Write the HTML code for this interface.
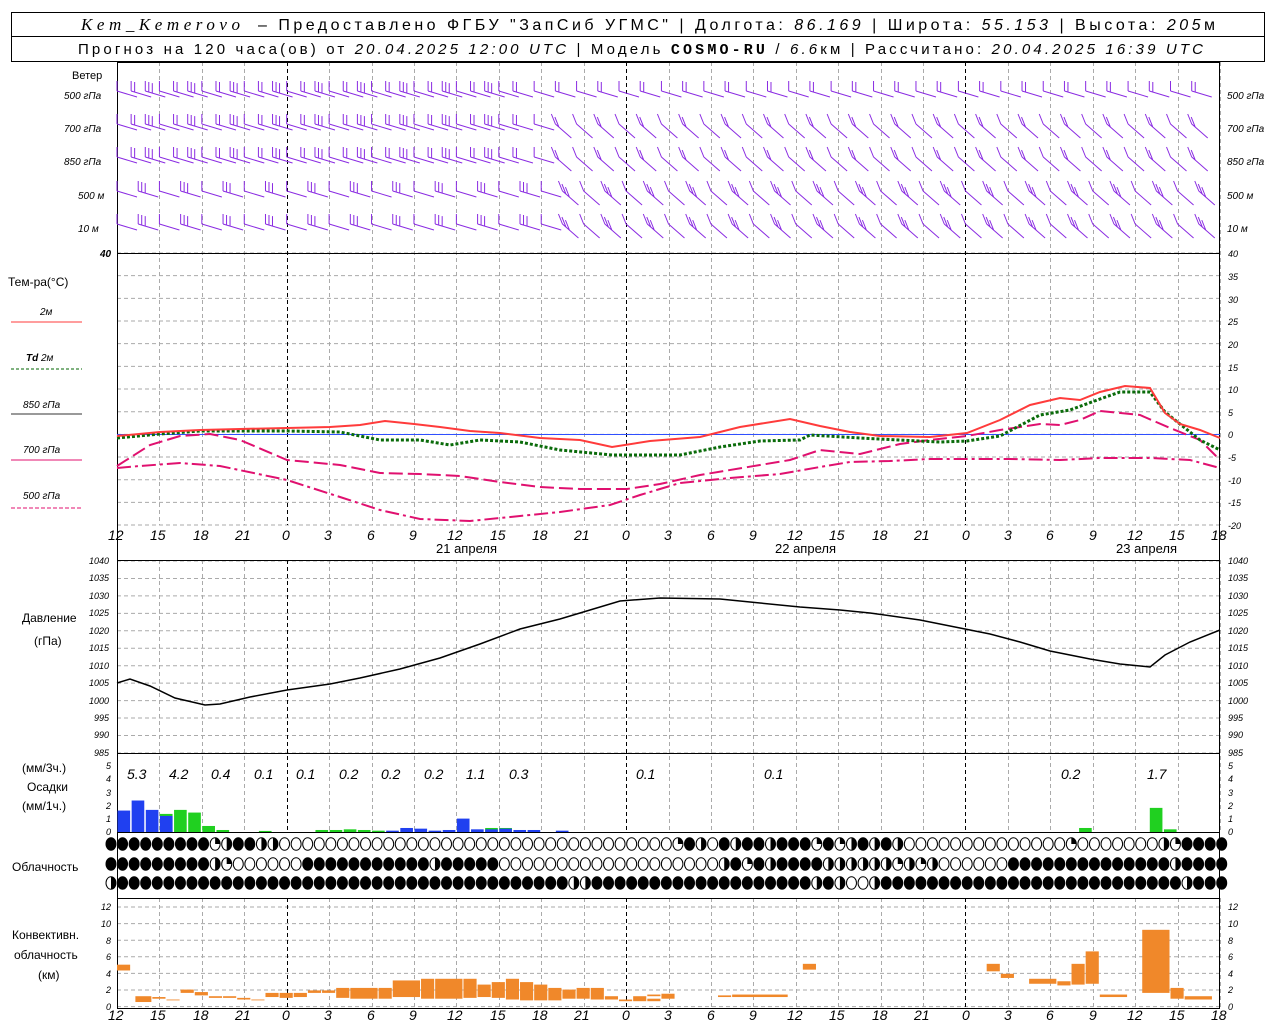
<!DOCTYPE html>
<html><head><meta charset="utf-8"><style>
html,body{margin:0;padding:0;background:#fff;}
svg{display:block;}
text{font-family:"Liberation Sans","DejaVu Sans",sans-serif;}
.t{font-size:12px;fill:#000;}
.it{font-style:italic;font-size:10px;fill:#000;}
</style></head><body>
<svg id="s" width="1280" height="1024" viewBox="0 0 1280 1024" xmlns="http://www.w3.org/2000/svg">
<rect width="1280" height="1024" fill="#fff"/>
<g id="grid"></g>
<rect x="11.5" y="12.5" width="1253" height="49" fill="none" stroke="#000"/>
<line x1="11" y1="36.5" x2="1265" y2="36.5" stroke="#000"/>
<text x="81" y="30" textLength="159" lengthAdjust="spacing" style="font-size:17px;font-family:'Liberation Serif',serif;font-style:italic">Kem_Kemerovo</text>
<text x="258" y="30" textLength="957" lengthAdjust="spacing" style="font-size:16px">– Предоставлено ФГБУ "ЗапСиб УГМС" | Долгота: <tspan font-style="italic">86.169</tspan> | Широта: <tspan font-style="italic">55.153</tspan> | Высота: <tspan font-style="italic">205</tspan>м</text>
<text x="78" y="54" textLength="1125" lengthAdjust="spacing" style="font-size:15px">Прогноз на 120 часа(ов) от <tspan font-style="italic">20.04.2025 12:00 UTC</tspan> | Модель <tspan style="font-family:'Liberation Mono',monospace;font-weight:bold">COSMO-RU</tspan> / <tspan font-style="italic">6.6</tspan>км | Рассчитано: <tspan font-style="italic">20.04.2025 16:39 UTC</tspan></text>
<text class="t" x="72" y="79" style="font-size:11px">Ветер</text>
<g class="it">
<text x="64" y="99">500 гПа</text>
<text x="64" y="132">700 гПа</text>
<text x="64" y="165">850 гПа</text>
<text x="78" y="199">500 м</text>
<text x="78" y="232">10   м</text>
<text x="1227" y="99">500 гПа</text>
<text x="1227" y="132">700 гПа</text>
<text x="1227" y="165">850 гПа</text>
<text x="1227" y="199">500 м</text>
<text x="1227" y="232">10   м</text>
<text x="100" y="257" font-weight="bold">40</text>
</g>
<g id="wind" stroke="#8a2be2" stroke-width="1" fill="none"></g>
<text class="t" x="8" y="286">Тем-ра(°C)</text>
<text class="it" x="40" y="315">2м</text>
<line x1="11" y1="322" x2="82" y2="322" stroke="#ff3b3b"/>
<text class="it" x="26" y="361"><tspan font-weight="bold">Td</tspan>  2м</text>
<line x1="11" y1="369" x2="82" y2="369" stroke="#060" stroke-dasharray="3,2"/>
<text class="it" x="23" y="408">850 гПа</text>
<line x1="11" y1="414" x2="82" y2="414" stroke="#333"/>
<text class="it" x="23" y="453">700 гПа</text>
<line x1="11" y1="460" x2="82" y2="460" stroke="#e0106f"/>
<text class="it" x="23" y="499">500 гПа</text>
<line x1="11" y1="508" x2="82" y2="508" stroke="#e0106f" stroke-dasharray="4,2"/>
<g class="it" style="font-size:9px">
<text x="1228" y="257">40</text><text x="1228" y="280">35</text><text x="1228" y="303">30</text><text x="1228" y="325">25</text><text x="1228" y="348">20</text><text x="1228" y="371">15</text><text x="1228" y="393">10</text><text x="1228" y="416">5</text><text x="1228" y="438">0</text><text x="1228" y="461">-5</text><text x="1228" y="484">-10</text><text x="1228" y="506">-15</text><text x="1228" y="529">-20</text>
</g>
<line x1="117" y1="434.5" x2="1220" y2="434.5" stroke="#3050ff"/>
<polyline fill="none" stroke="#e0106f" stroke-width="2" stroke-dasharray="14,4,3,4" points="117,468 140,466 180,463 220,466 287,480 340,497 380,510 420,519 470,521 520,516 560,512 610,505 640,495 680,483 730,478 780,474 820,467 850,462 890,461 930,459 967,459 1010,459 1060,460 1100,458 1150,458 1190,460 1220,468"/>
<polyline fill="none" stroke="#e0106f" stroke-width="2" stroke-dasharray="14,5" points="117,466 150,445 180,436 210,434 240,440 287,460 340,465 380,473 420,474 460,476 500,482 540,487 580,489 627,489 660,484 700,475 760,465 790,460 820,450 860,454 900,444 930,440 967,436 1000,430 1040,424 1060,425 1080,420 1100,411 1140,415 1170,428 1200,440 1220,460"/>
<polyline fill="none" stroke="#0a6b0a" stroke-width="3" stroke-dasharray="3,2" points="117,438 160,434 200,431 287,431 340,432 380,440 420,440 450,445 480,440 520,442 560,450 612,455 680,455 720,447 760,441 800,440 810,435 860,438 900,440 940,442 967,441 1000,436 1040,415 1070,410 1100,399 1120,392 1150,392 1165,412 1200,440 1220,450"/>
<polyline fill="none" stroke="#ff3b3b" stroke-width="2" points="117,436 160,432 200,430 240,429 287,428 330,427 360,425 385,421 414,424 440,427 470,431 500,433 540,438 580,440 612,447 650,441 700,437 740,427 790,419 820,426 850,432 880,436 930,437 967,433 1000,420 1030,405 1060,398 1080,400 1100,392 1125,386 1150,388 1165,413 1180,424 1200,430 1220,438"/>
<g class="t" style="font-size:13px">
<text x="436" y="553">21 апреля</text><text x="775" y="553">22 апреля</text><text x="1116" y="553">23 апреля</text>
</g>
<text class="t" x="22" y="622">Давление</text>
<text class="t" x="34" y="645">(гПа)</text>
<polyline fill="none" stroke="#000" stroke-width="1.5" points="117,683 130,679 150,686 175,698 205,705 220,704 250,697 287,690 330,684 360,678 400,669 440,658 480,644 520,629 560,619 590,610 620,601 660,598 720,599 760,603 800,607 840,610 870,613 920,620 960,628 990,634 1020,642 1050,651 1090,659 1120,664 1150,667 1165,655 1190,642 1220,630"/>
<text class="t" x="22" y="772">(мм/3ч.)</text>
<text class="t" x="27" y="791">Осадки</text>
<text class="t" x="22" y="810">(мм/1ч.)</text>
<g style="font-style:italic;font-size:14px;fill:#000">
<text x="127" y="779">5.3</text><text x="169" y="779">4.2</text><text x="211" y="779">0.4</text><text x="254" y="779">0.1</text><text x="296" y="779">0.1</text><text x="339" y="779">0.2</text><text x="381" y="779">0.2</text><text x="424" y="779">0.2</text><text x="466" y="779">1.1</text><text x="509" y="779">0.3</text><text x="636" y="779">0.1</text><text x="764" y="779">0.1</text><text x="1061" y="779">0.2</text><text x="1147" y="779">1.7</text>
</g>
<g id="pr"></g>
<text class="t" x="12" y="871">Облачность</text>
<g id="cl"></g>
<text class="t" x="12" y="939">Конвективн.</text>
<text class="t" x="14" y="959">облачность</text>
<text class="t" x="38" y="979">(км)</text>
<g id="cv" fill="#f0882a"></g>
<g style="font-style:italic;font-size:14px">
<text x="108" y="540">12</text><text x="150" y="540">15</text><text x="193" y="540">18</text><text x="235" y="540">21</text><text x="282" y="540">0</text><text x="324" y="540">3</text><text x="367" y="540">6</text><text x="409" y="540">9</text><text x="447" y="540">12</text><text x="490" y="540">15</text><text x="532" y="540">18</text><text x="574" y="540">21</text><text x="622" y="540">0</text><text x="664" y="540">3</text><text x="707" y="540">6</text><text x="749" y="540">9</text><text x="787" y="540">12</text><text x="829" y="540">15</text><text x="872" y="540">18</text><text x="914" y="540">21</text><text x="962" y="540">0</text><text x="1004" y="540">3</text><text x="1046" y="540">6</text><text x="1089" y="540">9</text><text x="1127" y="540">12</text><text x="1169" y="540">15</text><text x="1211" y="540">18</text>
<text x="108" y="1020">12</text><text x="150" y="1020">15</text><text x="193" y="1020">18</text><text x="235" y="1020">21</text><text x="282" y="1020">0</text><text x="324" y="1020">3</text><text x="367" y="1020">6</text><text x="409" y="1020">9</text><text x="447" y="1020">12</text><text x="490" y="1020">15</text><text x="532" y="1020">18</text><text x="574" y="1020">21</text><text x="622" y="1020">0</text><text x="664" y="1020">3</text><text x="707" y="1020">6</text><text x="749" y="1020">9</text><text x="787" y="1020">12</text><text x="829" y="1020">15</text><text x="872" y="1020">18</text><text x="914" y="1020">21</text><text x="962" y="1020">0</text><text x="1004" y="1020">3</text><text x="1046" y="1020">6</text><text x="1089" y="1020">9</text><text x="1127" y="1020">12</text><text x="1169" y="1020">15</text><text x="1211" y="1020">18</text>
</g>
<g style="font-style:italic;font-size:9px">
<text x="89" y="564">1040</text><text x="89" y="581">1035</text><text x="89" y="599">1030</text><text x="89" y="616">1025</text><text x="89" y="634">1020</text><text x="89" y="651">1015</text><text x="89" y="669">1010</text><text x="89" y="686">1005</text><text x="89" y="704">1000</text><text x="94" y="721">995</text><text x="94" y="738">990</text><text x="94" y="756">985</text>
<text x="1228" y="564">1040</text><text x="1228" y="581">1035</text><text x="1228" y="599">1030</text><text x="1228" y="616">1025</text><text x="1228" y="634">1020</text><text x="1228" y="651">1015</text><text x="1228" y="669">1010</text><text x="1228" y="686">1005</text><text x="1228" y="704">1000</text><text x="1228" y="721">995</text><text x="1228" y="738">990</text><text x="1228" y="756">985</text>
<text x="106" y="769">5</text><text x="106" y="782">4</text><text x="106" y="796">3</text><text x="106" y="809">2</text><text x="106" y="822">1</text><text x="106" y="835">0</text>
<text x="1228" y="769">5</text><text x="1228" y="782">4</text><text x="1228" y="796">3</text><text x="1228" y="809">2</text><text x="1228" y="822">1</text><text x="1228" y="835">0</text>
<text x="101" y="910">12</text><text x="101" y="927">10</text><text x="106" y="944">8</text><text x="106" y="960">6</text><text x="106" y="977">4</text><text x="106" y="993">2</text><text x="106" y="1010">0</text>
<text x="1228" y="910">12</text><text x="1228" y="927">10</text><text x="1228" y="944">8</text><text x="1228" y="960">6</text><text x="1228" y="977">4</text><text x="1228" y="993">2</text><text x="1228" y="1010">0</text>
</g>
</svg>
<script>
var NS="http://www.w3.org/2000/svg";
function el(p,t,a){var e=document.createElementNS(NS,t);for(var k in a)e.setAttribute(k,a[k]);p.appendChild(e);return e;}
var X0=117,PH=1103/78;function X(h){return X0+PH*h;}
var G=document.getElementById('grid');
function hg(y1,y2,step){for(var y=y1;y<=y2+0.1;y+=step)el(G,'line',{x1:117,x2:1220,y1:y,y2:y,stroke:'#aaa','stroke-dasharray':'4,3'});}
hg(253,525,22.67);hg(561,753,17.45);hg(907,1007,16.6);
for(var i=0;i<=26;i++){var x=Math.round(X(i*3))+0.5,day=(i*3+12)%24==0;
 var c=day?'#000':'#aaa';
 [[62,525],[560,832],[898,1008]].forEach(function(r){el(G,'line',{x1:x,x2:x,y1:r[0],y2:r[1],stroke:c,'stroke-dasharray':'4,3'});});}
[62.5,253.5,560.5,753.5,832.5,898.5,1008.5].forEach(function(y){el(G,'line',{x1:117,x2:1220,y1:y,y2:y,stroke:'#000'});});
[117.5,1219.5].forEach(function(x){el(G,'line',{x1:x,x2:x,y1:62,y2:1008,stroke:'#000'});});
var W=document.getElementById('wind'),lv=[95,128,161,195,228];
for(var l=0;l<5;l++)for(var h=0;h<=77;h+=(h<28&&l<3?1:1.5)){var x=X(h),y=lv[l];
 var right=h>30&&l>=1;var len=right?16:20,dy=right?14:6;
 var d='M'+x+' '+(y-4)+'l'+len+' '+dy;
 var nb=1+((Math.round(h)*7+l*3)%3);
 for(var b=0;b<nb;b++){var bx=x+b*3.5,by=y-4+dy*b*3.5/len;d+='M'+bx+' '+by+'l'+(right?-4:0)+' -10';}
 el(W,'path',{d:d});}
var PR=document.getElementById('pr');
var pb=[[0,1.6,'b'],[1,2.35,'b'],[2,1.65,'b'],[3,1.35,'g'],[3,1.2,'b'],[4,1.65,'g'],[5,1.45,'g'],[6,0.45,'g'],[7,0.15,'g'],[10,0.08,'g'],[14,0.15,'g'],[15,0.15,'g'],[16,0.2,'g'],[17,0.15,'g'],[18,0.1,'g'],[19,0.1,'b'],[20,0.3,'b'],[21,0.25,'b'],[22,0.1,'b'],[23,0.15,'b'],[24,1.0,'b'],[25,0.2,'b'],[26,0.3,'g'],[26,0.2,'b'],[27,0.3,'g'],[27,0.25,'b'],[28,0.15,'b'],[29,0.15,'b'],[31,0.1,'b'],[68,0.3,'g'],[73,1.8,'g'],[74,0.2,'g']];
pb.forEach(function(p){var x=X(p[0]),hh=p[1]*13.4;el(PR,'rect',{x:x+0.5,y:832-hh,width:PH-1.5,height:hh,fill:p[2]=='b'?'#2040f0':'#20d020'});});
var CL=document.getElementById('cl');
var rows=[
 "BBBBBBBBBQHBBHHWWWWWWWWWWWWWWWWWWWWWWWWWWWWWWWWWWQBHWBHBBHBBBQBQHBHBHWWWWWWWWWWWWWWQWWWWWWWHQBBBBBBHQBQH",
 "BBBBBBBBBHQWWWWWWBBBBBBBBBBBHBBBBBWWWWWWWWWWWWWWWWWWWHBQBHBBBBHHHHHHQHQHWWWWWWBBBBBBBBBBBBBBHBBBBBBBBQQB",
 "HBBBBBBBBBBBBBBBBBBBBBBBBBBBBBBBBBBBBBBBHHBBBBBBBBBBBBBBBBBBBHBHWWHBBBBBBBBBBBBBBBBBBBBBBBBBBHBBBBBHBBBHB"];
var cy=[844,864,883];
for(var r=0;r<3;r++)for(var i=0;i<97;i++){var x=111+i*11.57,ch=rows[r][i]||'B',y=cy[r];
 var g=el(CL,'g',{});
 el(g,'ellipse',{cx:x,cy:y,rx:5,ry:6.2,fill:ch=='B'?'#000':'#fff',stroke:'#000'});
 if(ch=='H')el(g,'path',{d:'M'+x+' '+(y-6.2)+'A5 6.2 0 0 1 '+x+' '+(y+6.2)+'Z',fill:'#000'});
 if(ch=='Q')el(g,'path',{d:'M'+x+' '+y+'L'+x+' '+(y-6.2)+'A5 6.2 0 0 1 '+(x+5)+' '+y+'Z',fill:'#000'});
}
var CV=document.getElementById('cv');
var cb=[[0,1,4.4,5.1],[1.3,2.5,0.6,1.3],[2.5,3.5,1.0,1.2],[3.5,4.5,0.8,0.9],[4.5,5.5,1.7,2.1],[5.5,6.5,1.4,1.8],[6.5,7.5,1.1,1.3],[7.5,8.5,1.1,1.3],[8.5,9.5,0.9,1.1],[9.5,10.5,0.8,0.9],[10.5,11.5,1.2,1.7],[11.5,12.5,1.1,1.7],[12.5,13.5,1.2,1.7],[13.5,14.5,1.7,2.0],[14.5,15.5,1.7,2.0],[15.5,16.5,1.1,2.3],[16.5,18.5,1.0,2.3],[18.5,19.5,1.0,2.3],[19.5,21.5,1.2,3.2],[21.5,22.5,1.0,3.4],[22.5,24.5,1.0,3.4],[24.5,25.5,1.1,3.4],[25.5,26.5,1.2,2.7],[26.5,27.5,1.1,3.0],[27.5,28.5,0.9,3.4],[28.5,29.5,0.8,3.0],[29.5,30.5,0.8,2.7],[30.5,31.5,0.8,2.3],[31.5,32.5,1.0,2.1],[32.5,33.5,1.0,2.3],[33.5,34.5,0.9,2.3],[34.5,35.5,0.9,1.3],[35.5,36.5,0.7,0.9],[36.5,37.5,0.7,1.3],
[37.5,38.5,0.7,1.0],[37.5,38.5,1.3,1.5],[38.5,39.5,1.0,1.6],[42.5,43.5,1.2,1.4],[43.5,47.5,1.2,1.5],[48.5,49.5,4.5,5.2],[61.5,62.5,4.3,5.2],[62.5,63.5,3.5,4.0],[64.5,66.5,2.8,3.4],[66.5,67.5,2.6,3.1],[67.5,68.5,2.7,5.2],[68.5,69.5,2.8,6.7],[69.5,71.5,1.2,1.5],[72.5,74.5,1.7,9.3],[74.5,75.5,1.0,2.3],[75.5,77.5,0.9,1.3]];
cb.forEach(function(c){var x1=X(c[0]),x2=X(c[1]);el(CV,'rect',{x:x1,y:1007-c[3]*8.3,width:x2-x1-1,height:(c[3]-c[2])*8.3});});
</script>
</body></html>
